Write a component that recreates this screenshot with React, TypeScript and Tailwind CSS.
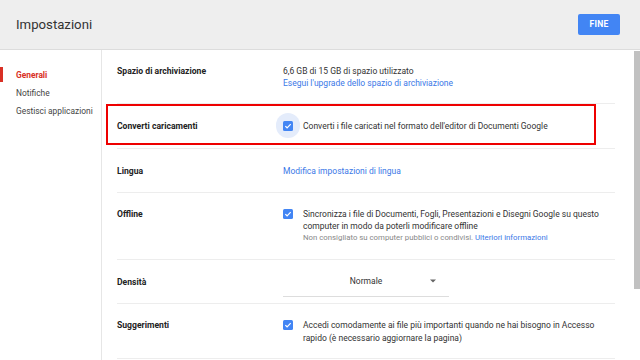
import React from "react";

const Check = ({ halo = false }: { halo?: boolean }) => (
  <div className="relative w-[10px] h-[10px] shrink-0">
    {halo && (
      <div className="absolute left-[-7px] top-[-8px] w-[24px] h-[25px] rounded-full bg-[#e4ecfb]" />
    )}
    <div className="absolute inset-0 rounded-[1.5px] bg-[#4285f4] flex items-center justify-center">
      <svg width="8" height="8" viewBox="0 0 8 8">
        <path d="M1.3 4.1 L3.1 5.8 L6.7 2.2" fill="none" stroke="#fff" strokeWidth="1.2" />
      </svg>
    </div>
  </div>
);

export default function App() {
  return (
    <div
      className="relative w-[640px] h-[360px] overflow-hidden bg-white text-[#444]"
      style={{ fontFamily: "Roboto, 'Noto Sans', Arial, sans-serif" }}
    >
      <header className="h-[50px] bg-[#eeeeee] border-b border-[#dcdcdc] flex items-center justify-between pl-4 pr-[20px]">
        <div className="text-[13.2px] text-[#333] leading-none">Impostazioni</div>
        <div className="w-[42px] h-[21px] rounded-[2px] bg-[#4285f4] text-white text-[8.5px] font-bold flex items-center justify-center tracking-[0.3px]">
          FINE
        </div>
      </header>
      <div className="flex h-[310px]">
        <aside className="w-[102px] border-r border-[#e6e6e6] pt-[16px] text-[8.4px]">
          <div className="relative h-[18px] leading-[18px] pl-4 text-[#d93025] font-bold">
            <div className="absolute left-0 top-[1px] w-[3px] h-[15px] bg-[#d93025]" />
            Generali
          </div>
          <div className="h-[18px] leading-[18px] pl-4">Notifiche</div>
          <div className="h-[18px] leading-[18px] pl-4">Gestisci applicazioni</div>
        </aside>
        <main className="flex-1 pl-[15px] pr-[19px] text-[8.5px]">
          {/* Row 1 */}
          <div className="h-[54px] border-b border-[#ededed] flex items-start pt-[15px] leading-[12px]">
            <div className="w-[166px] font-bold text-[#222] text-[8.6px]">Spazio di archiviazione</div>
            <div>
              <div className="text-[#333]">6,6 GB di 15 GB di spazio utilizzato</div>
              <div className="text-[#3b78e7]">Esegui l'upgrade dello spazio di archiviazione</div>
            </div>
          </div>
          {/* Row 2 */}
          <div className="h-[45px] border-b border-[#ededed] flex items-center leading-[12px]">
            <div className="w-[166px] font-bold text-[#222] text-[8.6px]">Converti caricamenti</div>
            <div className="flex items-center gap-[10px]">
              <Check halo />
              <div className="text-[#333]">Converti i file caricati nel formato dell'editor di Documenti Google</div>
            </div>
          </div>
          {/* Row 3 */}
          <div className="h-[44px] border-b border-[#ededed] flex items-center leading-[12px]">
            <div className="w-[166px] font-bold text-[#222] text-[8.6px]">Lingua</div>
            <div className="text-[#3b78e7]">Modifica impostazioni di lingua</div>
          </div>
          {/* Row 4 */}
          <div className="h-[67px] border-b border-[#ededed] flex items-start pt-[15px] leading-[12px]">
            <div className="w-[166px] font-bold text-[#222] text-[8.6px]">Offline</div>
            <div className="flex items-start gap-[10px]">
              <div className="pt-[1px]"><Check /></div>
              <div>
                <div className="text-[#333]">Sincronizza i file di Documenti, Fogli, Presentazioni e Disegni Google su questo</div>
                <div className="text-[#333]">computer in modo da poterli modificare offline</div>
                <div className="text-[7.8px] text-[#888]">
                  Non consigliato su computer pubblici o condivisi.{" "}
                  <span className="text-[#3b78e7]">Ulteriori informazioni</span>
                </div>
              </div>
            </div>
          </div>
          {/* Row 5 */}
          <div className="h-[44px] border-b border-[#ededed] flex items-center leading-[12px]">
            <div className="w-[166px] font-bold text-[#222] text-[8.6px]">Densità</div>
            <div className="relative w-[166px] h-[22px] border-b border-[#dddddd] flex items-center justify-center mt-[8px] pb-[1px]">
              <span className="text-[#333] -mt-[8px]">Normale</span>
              <svg className="absolute right-[13px] top-[4px]" width="6" height="4" viewBox="0 0 6 4">
                <path d="M0 0.5 L6 0.5 L3 3.5 Z" fill="#666" />
              </svg>
            </div>
          </div>
          {/* Row 6 */}
          <div className="h-[55px] border-b border-[#ededed] flex items-start pt-[15px] leading-[13px]">
            <div className="w-[166px] font-bold text-[#222] text-[8.6px]">Suggerimenti</div>
            <div className="flex items-start gap-[10px]">
              <div className="pt-[1px]"><Check /></div>
              <div className="text-[#333]">
                <div>Accedi comodamente ai file più importanti quando ne hai bisogno in Accesso</div>
                <div>rapido (è necessario aggiornare la pagina)</div>
              </div>
            </div>
          </div>
        </main>
        <div className="w-[6px] pt-[1px]">
          <div className="h-[238px] bg-[#c1c1c1]" />
        </div>
      </div>
      <div className="absolute left-[106px] top-[104px] w-[490px] h-[41px] border-2 border-[#ee0000] pointer-events-none" />
    </div>
  );
}
